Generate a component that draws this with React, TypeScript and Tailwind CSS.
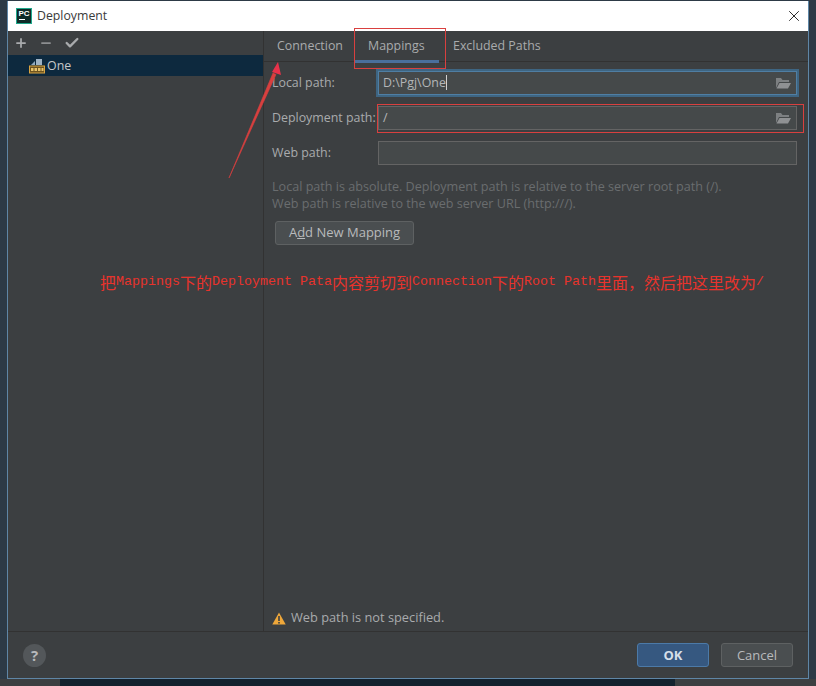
import React from 'react';
import { Plus, Minus, Check, X } from 'lucide-react';

const uiFont = "font-['Open_Sans','Noto_Sans',sans-serif]";

const FolderIcon = () => (
  <svg width="16" height="14" viewBox="0 0 16 14" className="shrink-0">
    <path d="M1 2h5l1.5 2H14v2H4L1 12z" fill="#7d8082" />
    <path d="M4.5 7H16l-3 5.5H1.5z" fill="#8f9193" />
  </svg>
);

const ServerIcon = () => (
  <svg width="16" height="17" viewBox="0 0 16 17" className="shrink-0">
    <path d="M2 7l4-4v4z" fill="#8fa9bf" />
    <rect x="7" y="1" width="6" height="6" fill="#9db2c4" />
    <rect x="0.5" y="8" width="15" height="7" fill="#6e5420" stroke="#d9a441" />
    <rect x="2" y="10" width="2.5" height="3" fill="#e8c36a" />
    <rect x="5.5" y="10" width="2.5" height="3" fill="#e8c36a" />
    <rect x="9" y="10" width="2.5" height="3" fill="#e8c36a" />
    <rect x="12.5" y="10" width="2" height="3" fill="#e8c36a" />
  </svg>
);

const PathField = ({ label, value, focused, folder }: { label: string; value?: string; focused?: boolean; folder?: boolean }) => (
  <div className="flex items-center h-[24px]">
    <span className="w-[106px] shrink-0 whitespace-nowrap text-[12.4px] text-[#a9abad]">{label}</span>
    <div
      className={`flex-1 h-[24px] flex items-center justify-between pl-[4px] pr-[5px] bg-[#45494a] text-[12.4px] text-[#b4b6b8] border ${
        focused ? 'border-[#4f7ea3] outline-2 outline-[#3e6582]' : 'border-[#646464]'
      }`}
    >
      <span className="flex items-center">
        {value}
        {focused && <span className="w-px h-[15px] bg-[#d0d0d0]" />}
      </span>
      {folder && <FolderIcon />}
    </div>
  </div>
);

const cjk = "text-[16px] font-['Noto_Sans_CJK_SC',sans-serif]";
const latin = "text-[13.33px] font-['Liberation_Mono',monospace]";

export default function App() {
  return (
    <div className={`relative w-[816px] h-[686px] overflow-hidden bg-[#2d3a46] ${uiFont}`}>
      <div className="flex flex-col h-[679px] ml-[7px] mr-[7px] pt-px">
        <div className="flex-1 flex flex-col border border-t-0 border-[#5f86a6] bg-[#3c3f41] min-h-0">
          {/* title bar */}
          <div className="h-[30px] shrink-0 bg-white flex items-center pl-[8px] pr-[5px]">
            <div className="w-[16px] h-[16px] bg-[#0f2b28] border border-[#1fa98c] flex flex-col items-center justify-start shrink-0">
              <span className="text-[8px] leading-[9px] font-bold text-white font-['Liberation_Sans',sans-serif]">PC</span>
              <span className="self-start ml-[2px] mt-[1px] w-[6px] h-px bg-white" />
            </div>
            <span className="ml-[5px] text-[12.3px] text-[#3a3a3a]">Deployment</span>
            <X size={18} strokeWidth={1.1} className="ml-auto text-black" />
          </div>

          {/* main split */}
          <div className="flex-1 flex min-h-0">
            <div className="w-[255px] shrink-0 flex flex-col">
              <div className="h-[24px] shrink-0 flex items-center gap-[11px] pl-[6px] text-[#a9abad]">
                <Plus size={14} strokeWidth={3} />
                <Minus size={14} strokeWidth={3} className="text-[#8c8e90]" />
                <Check size={16} strokeWidth={3.5} />
              </div>
              <div className="h-[21px] flex items-center pl-[21px] gap-[2px] pt-[1px] bg-[#0d293e] text-[12.4px] text-[#c6c8ca]">
                <ServerIcon />
                <span>One</span>
              </div>
            </div>

            <div className="flex-1 flex flex-col min-w-0 border-l border-[#323232]">
              <div className="h-[31px] shrink-0 flex items-start pl-[4px] border-b border-[#323232] text-[12.4px] text-[#a9abad]">
                <div className="h-[31px] px-[9px] pt-[6px] w-[86px]">Connection</div>
                <div className="h-[32px] w-[85px] pl-[14px] pt-[6px] border-b-[3px] border-[#4a6f9c]">Mappings</div>
                <div className="h-[31px] pl-[14px] pt-[6px]">Excluded Paths</div>
              </div>

              <div className="flex-1 flex flex-col pl-[8px] pr-[11px] pt-[9px] min-h-0">
                <div className="flex flex-col gap-[11px]">
                  <PathField label="Local path:" value="D:\Pgj\One" focused folder />
                  <PathField label="Deployment path:" value="/" folder />
                  <PathField label="Web path:" />
                </div>
                <p className="mt-[13px] text-[12.6px] leading-[17px] text-[#6a6d6f]">
                  Local path is absolute. Deployment path is relative to the server root path (/).
                  <br />
                  Web path is relative to the web server URL (http:///).
                </p>
                <button className="mt-[9px] ml-[3px] w-[139px] h-[24px] rounded-[3px] border border-[#5e6162] bg-[#4a4e50] text-[13px] text-[#b8babc] text-center">
                  A<span className="underline">d</span>d New Mapping
                </button>
                <div className="mt-auto h-[26px] flex items-center gap-[5px] text-[12.8px] text-[#a9abad]">
                  <svg width="14" height="13" viewBox="0 0 14 13" className="shrink-0">
                    <path d="M7 0.5L13.7 12.5H0.3z" fill="#eea73a" />
                    <rect x="6.2" y="4" width="1.6" height="5" fill="#3c3f41" />
                    <rect x="6.2" y="10" width="1.6" height="1.6" fill="#3c3f41" />
                  </svg>
                  <span>Web path is not specified.</span>
                </div>
              </div>
            </div>
          </div>

          {/* footer */}
          <div className="h-[47px] shrink-0 flex items-center pl-[15px] pr-[15px] border-t border-[#323232]">
            <div className="w-[23px] h-[23px] rounded-full bg-[#53575a] flex items-center justify-center text-[15px] font-bold text-[#b8babc]">?</div>
            <button className="ml-auto w-[72px] h-[24px] rounded-[3px] border border-[#4c7aa8] bg-[#365880] text-[13px] font-bold text-[#d6dfe8] pt-px">OK</button>
            <button className="ml-[12px] w-[72px] h-[24px] rounded-[3px] border border-[#5e6162] bg-[#4a4e50] text-[13px] text-[#b8babc] pt-px">Cancel</button>
          </div>
        </div>
      </div>

      {/* strip of the window behind */}
      <div className="flex h-[7px]">
        <div className="w-[60px] bg-[#3c3f41]" />
        <div className="flex-1 bg-[#14222e]" />
        <div className="w-[141px] bg-[#3c3f41]" />
      </div>

      {/* red annotations drawn over the screenshot */}
      <div className="absolute left-[354px] top-[28px] w-[92px] h-[41px] border border-[#d9403f]" />
      <div className="absolute left-[377px] top-[104px] w-[427px] h-[29px] border border-[#d9403f]" />
      <svg className="absolute left-[222px] top-[55px]" width="64" height="130" viewBox="0 0 64 130">
        <path d="M7 123L51 18L54 19.5z" fill="#d9403f" stroke="#d9403f" strokeWidth="0.6" />
        <path d="M56 7L59 20L50 17z" fill="#e8324a" />
      </svg>
      <div className="absolute left-[100px] top-[271px] h-[22px] flex items-center whitespace-nowrap text-[#e8332c]">
        <span className={cjk}>把</span>
        <span className={latin}>Mappings</span>
        <span className={cjk}>下的</span>
        <span className={latin}>{'Deployment\u00a0Pata'}</span>
        <span className={cjk}>内容剪切到</span>
        <span className={latin}>Connection</span>
        <span className={cjk}>下的</span>
        <span className={latin}>{'Root\u00a0Path'}</span>
        <span className={cjk}>里面，然后把这里改为</span>
        <span className={latin}>/</span>
      </div>
    </div>
  );
}
